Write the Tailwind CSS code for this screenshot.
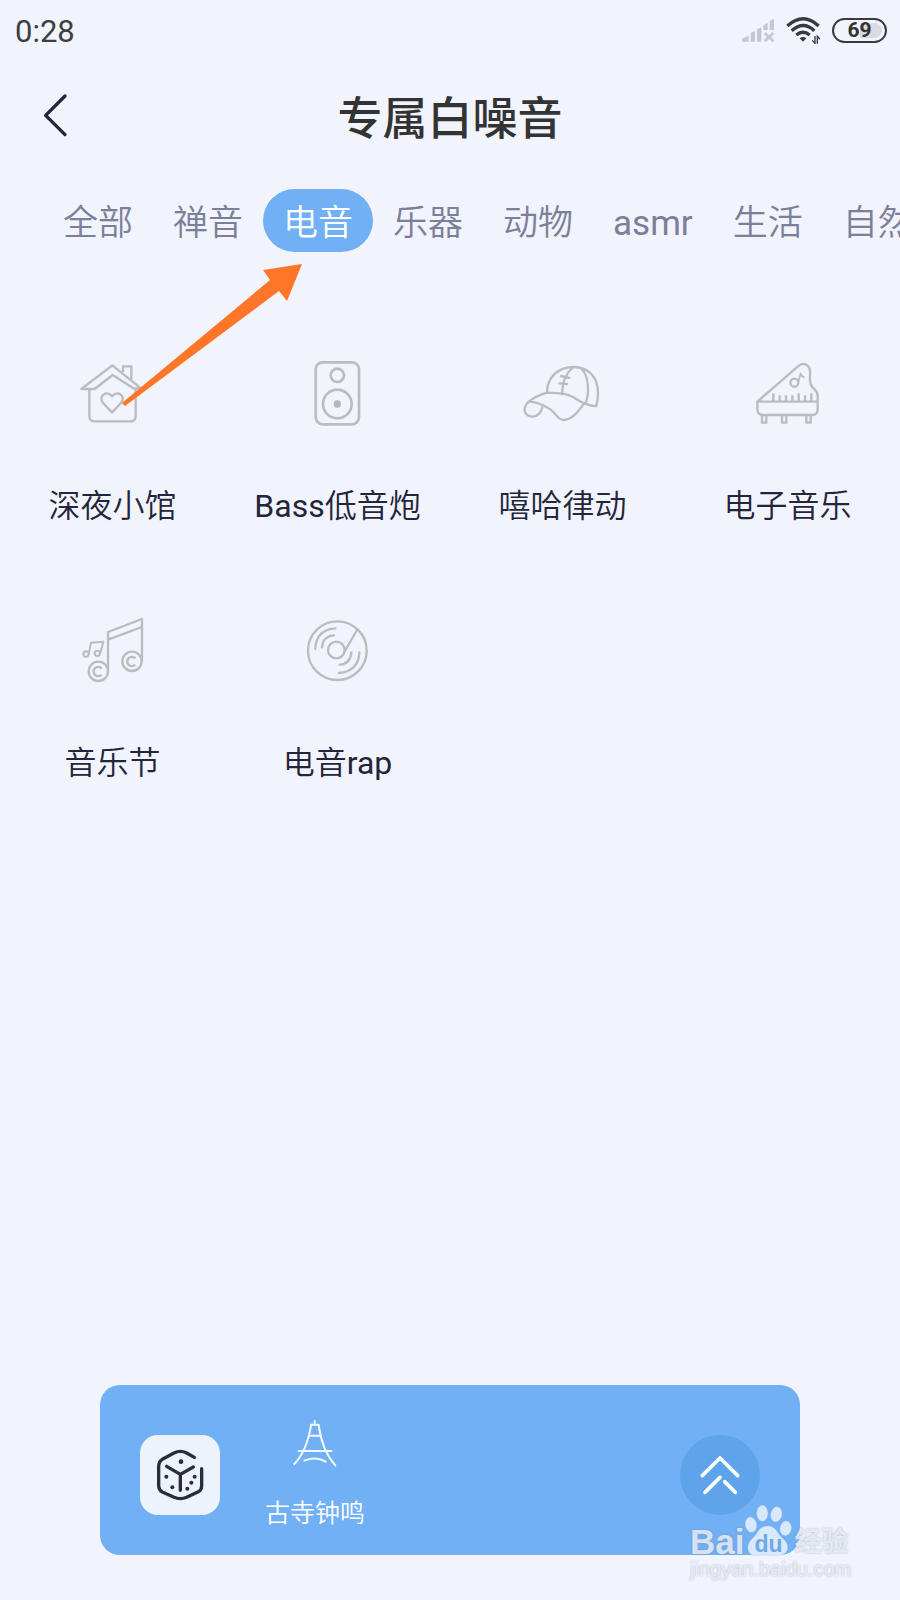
<!DOCTYPE html>
<html lang="zh-CN">
<head>
<meta charset="utf-8">
<meta name="viewport" content="width=device-width, initial-scale=1">
<title>专属白噪音</title>
<script src="https://cdn.jsdelivr.net/npm/@tailwindcss/browser@4"></script>
</head>
<body class="bg-[#f1f4fc] font-[Roboto,'Noto_Sans_CJK_SC',sans-serif] text-[#24243a]">
<div class="relative flex min-h-screen flex-col overflow-hidden">

  <!-- Status bar -->
  <div class="flex h-[60px] items-center justify-between pl-[15px] pr-[13px] text-[#3e3e42]">
    <span class="pt-1 text-[31px]">0:28</span>
    <div class="flex items-center gap-3">
      <svg class="h-6 w-8" viewBox="876 52 96 72" fill="#c6c8cf" aria-hidden="true">
        <path d="M876 123v-9l20-9v18zM902 123V97l13-6v32zM921 123V86l13-6v43zM940 88V74l13-7v21zM959 88V61l13-7v34z"/>
        <path d="M944 97l26 25M970 97l-26 25" stroke="#c6c8cf" stroke-width="8"/>
      </svg>
      <svg class="h-[27px] w-[34px]" viewBox="1008 51 102 81" fill="none" stroke="#3a3a3e" aria-hidden="true">
        <path d="M1012 78q48-43 94 0M1025 92q35-31 68 0M1039 105q20-17 40 0" stroke-width="10"/>
        <path d="M1049 115q10-8 20 0l-10 10z" fill="#3a3a3e" stroke="none"/>
        <path d="M1095 108v22l-8-9M1102 131v-22l8 9" stroke-width="4"/>
      </svg>
      <div class="flex h-[25px] w-[55px] rounded-full border-2 border-[#3a3a3e] p-[3px]">
        <div class="flex flex-1 items-center justify-center rounded-full bg-linear-to-r from-[#f1f4fc] from-50% to-[#d9dbe2] to-50% text-[21px] font-bold leading-none text-[#333]">69</div>
      </div>
    </div>
  </div>

  <!-- Title bar -->
  <header class="grid h-[112px] grid-cols-[1fr_auto_1fr] items-center border-b-2 border-[#f2f4f8]">
    <button class="ml-[34px] flex h-12 w-12 items-center" aria-label="返回">
      <svg class="h-12 w-10" viewBox="0 120 120 144" fill="none" stroke="#24243a" stroke-width="10" stroke-linecap="round" stroke-linejoin="round"><path d="M93 135L35 193l58 58"/></svg>
    </button>
    <h1 class="pt-[9px] text-[45px] font-medium leading-[60px] text-[#333]">专属白噪音</h1>
  </header>

  <!-- Category tabs -->
  <nav class="mt-[17px] flex h-[63px] overflow-x-auto overflow-y-hidden whitespace-nowrap pl-[43px] text-[35px] font-[350] leading-[56px] text-[#7b7f9a] [scrollbar-width:none]">
    <button class="shrink-0 px-5 pt-[6px]">全部</button>
    <button class="shrink-0 px-5 pt-[6px]">禅音</button>
    <button class="shrink-0 rounded-full bg-[#71b0f4] px-5 pt-[6px] text-white">电音</button>
    <button class="shrink-0 px-5 pt-[6px]">乐器</button>
    <button class="shrink-0 px-5 pt-[6px]">动物</button>
    <button class="shrink-0 px-5 pt-[6px] font-normal">asmr</button>
    <button class="shrink-0 px-5 pt-[6px]">生活</button>
    <button class="shrink-0 px-5 pt-[6px]">自然</button>
  </nav>

  <!-- Sounds -->
  <main class="mt-[88px] grid grid-cols-4 text-[32px] font-[350] leading-[48px]">
    <button class="flex flex-col items-center pb-[67px]">
      <svg class="mb-[42px] h-[100px] w-[100px]" viewBox="9 270 300 300" fill="none" stroke="#bcbcbe" stroke-width="7" stroke-linejoin="round">
        <path d="M88 417v80q0 17 17 17h105q17 0 17-17v-80M64 417l93-71 86 69h-23l-62-40-54 42zM189 366v-17h25v39"/>
        <path d="M156 487l-27-28c-17-22 14-40 27-20 14-20 45-2 27 20z"/>
      </svg>
      <span>深夜小馆</span>
    </button>
    <button class="flex flex-col items-center pb-[67px]">
      <svg class="mb-[42px] h-[100px] w-[100px]" viewBox="-5 0 300 300" fill="none" stroke="#bcbcbe" stroke-width="8">
        <rect x="78" y="67" width="130" height="186" rx="21"/><circle cx="143" cy="106" r="20"/><circle cx="143" cy="192" r="43"/><circle cx="143" cy="192" r="11" fill="#b5b5b7" stroke="none"/>
      </svg>
      <span><span class="font-normal">Bass</span>低音炮</span>
    </button>
    <button class="flex flex-col items-center pb-[67px]">
      <svg class="mb-[42px] h-[100px] w-[100px]" viewBox="9 0 300 300" fill="none" stroke="#bcbcbe" stroke-width="7" stroke-linecap="round" stroke-linejoin="round">
        <path d="M111 158c0-45 33-77 79-77 49 0 74 35 74 77q0 20-5 40-17 0-36-8M111 158q-34 9-59 31c-15 19-9 40 17 41q20-1 28-27M111 158q33 0 57 5c23 5 38 21 55 27-16 20-33 49-63 50-21-2-24-27-46-36q-26-16-54-19"/>
        <path d="M189 82c-23 18-32 44-33 80M215 87c24 23 22 78 12 102M153 108l25 6M148 130l23 2"/>
      </svg>
      <span>嘻哈律动</span>
    </button>
    <button class="flex flex-col items-center pb-[67px]">
      <svg class="mb-[42px] h-[100px] w-[100px]" viewBox="-5 0 300 300" fill="none" stroke="#bcbcbe" stroke-width="7" stroke-linejoin="round">
        <path d="M53 185L174 80c16-15 34-8 37 12 2 17-4 25 3 43 5 13 20 14 20 33v40q0 17-17 17H70q-17 0-17-17zM53 185h181M101 185v-25M120 185v-19M139 185v-19M158 185v-19M177 185v-25M196 185v-19M215 185v-25M67 226v22h13v-22M127 226v22h13v-22M200 226v22h13v-22"/>
        <circle cx="164" cy="128" r="12"/><path d="M176 125l7-25q1 10 11 12" stroke-width="5"/>
      </svg>
      <span>电子音乐</span>
    </button>
    <button class="flex flex-col items-center pb-[67px]">
      <svg class="mb-[42px] h-[100px] w-[100px]" viewBox="-22 -9 300 300" fill="none" stroke="#bcbcbe" stroke-width="7" stroke-linejoin="round">
        <circle cx="84" cy="214" r="29"/><circle cx="185" cy="184" r="29"/>
        <path d="M113 215V96l102-39v127M113 119l102-38M94 205a14 14 0 1 0 0 19M195 175a14 14 0 1 0 0 19"/>
        <circle cx="47" cy="162" r="8" stroke-width="6"/><circle cx="81" cy="160" r="8" stroke-width="6"/>
        <path d="M55 162l7-34 37-3-9 35" stroke-width="6"/>
      </svg>
      <span>音乐节</span>
    </button>
    <button class="flex flex-col items-center pb-[67px]">
      <svg class="mb-[42px] h-[100px] w-[100px]" viewBox="-5 -9 300 300" fill="none" stroke="#bcbcbe" stroke-width="7" stroke-linecap="round">
        <circle cx="143" cy="152" r="88"/><circle cx="140" cy="150" r="25"/>
        <path d="M164 156l38-66M77 147c0-37 24-61 60-62M97 142q3-34 36-36M148 219c36-2 61-24 61-62M150 194q32-2 35-37"/>
      </svg>
      <span>电音<span class="font-normal">rap</span></span>
    </button>
  </main>

  <!-- Player -->
  <section class="mx-[100px] mb-[45px] mt-auto flex h-[170px] items-center rounded-[20px] bg-[#71b0f4] px-10 pt-[10px]">
    <button class="flex h-20 w-20 items-center justify-center rounded-[18px] bg-[#edf3fc]" aria-label="随机播放">
      <svg class="h-20 w-20" viewBox="150 195 240 240" fill="none" stroke="#2b2c3b" stroke-width="10" stroke-linecap="round" stroke-linejoin="round">
        <path d="M313 262l-23-13q-19-10-38 0l-35 19q-11 7-11 22v57q0 12 11 19l35 16q19 8 38 0l35-17q10-5 10-18v-51M230 289l41 24 39-22M271 313v48"/>
        <g fill="#2b2c3b" stroke="none"><circle cx="273" cy="275" r="7"/><circle cx="229" cy="320" r="6"/><circle cx="247" cy="352" r="6"/><circle cx="314" cy="320" r="6"/><circle cx="304" cy="338" r="6"/><circle cx="292" cy="356" r="6"/></g>
      </svg>
    </button>
    <button class="ml-[45px] flex flex-col items-center text-[25px] font-[350] leading-9 text-white">
      <svg class="mb-[27px] h-[50px] w-[50px]" viewBox="600 148 150 150" fill="none" stroke="#f2fbff" stroke-width="6" stroke-linecap="round" stroke-linejoin="round">
        <path d="M674 154v10M663 165h23M663 167c-8 49-22 87-50 116M686 167c7 50 21 88 50 120M657 198h36M626 244h98M643 273q34-15 64 3"/>
      </svg>
      <span>古寺钟鸣</span>
    </button>
    <button class="ml-auto flex h-20 w-20 items-center justify-center rounded-full bg-[#5ea4ea]" aria-label="展开">
      <svg class="h-20 w-20" viewBox="59 195 240 240" fill="none" stroke="#fff" stroke-width="11" stroke-linecap="round" stroke-linejoin="round"><path d="M126 317l53-53 53 53M134 367l45-45M193 335l32 32"/></svg>
    </button>
  </section>

  <!-- Pointer arrow over the tabs -->
  <svg class="pointer-events-none absolute left-[120px] top-[260px] h-[150px] w-[190px]" viewBox="120 260 190 150" fill="#ff7628" aria-hidden="true"><path d="M302 264l-39 6 7 10L122 403l3 3 154-115 8 10z"/></svg>

  <!-- Watermark -->
  <div class="pointer-events-none absolute bottom-[20px] right-[48px] w-[162px] font-['Liberation_Sans','Noto_Sans_CJK_SC',sans-serif] text-[#f4f7fd]/80 [text-shadow:0_0_2px_#7080a099]">
    <div class="flex h-[54px] items-end">
      <span class="text-[35px] font-bold leading-[32px]">Bai</span>
      <div class="relative h-[54px] w-[50px]">
        <svg class="h-full w-full" viewBox="254 398 150 162" fill="#eaf3fe" fill-opacity=".85" stroke="#a9bbd4" stroke-opacity=".5" stroke-width="2" aria-hidden="true">
          <ellipse cx="275" cy="460" rx="17" ry="23" transform="rotate(-10 275 460)"/><ellipse cx="309" cy="426" rx="17" ry="24"/><ellipse cx="351" cy="429" rx="17" ry="23" transform="rotate(12 351 429)"/><ellipse cx="379" cy="471" rx="17" ry="22" transform="rotate(10 379 471)"/>
          <path d="M325 464c27 0 28 23 45 37 28 24 14 52-16 52-18 0-38-5-56 0-33 5-43-28-20-50 18-16 20-39 47-39z"/>
        </svg>
        <span class="absolute bottom-[2px] left-[10px] text-[23px] font-bold leading-6 text-[#71a8e6] [text-shadow:none]">du</span>
      </div>
      <span class="text-[27px] font-bold leading-[32px]">经验</span>
    </div>
    <div class="text-[20px] leading-[22px]">jingyan.baidu.com</div>
  </div>
</div>
</body>
</html>
